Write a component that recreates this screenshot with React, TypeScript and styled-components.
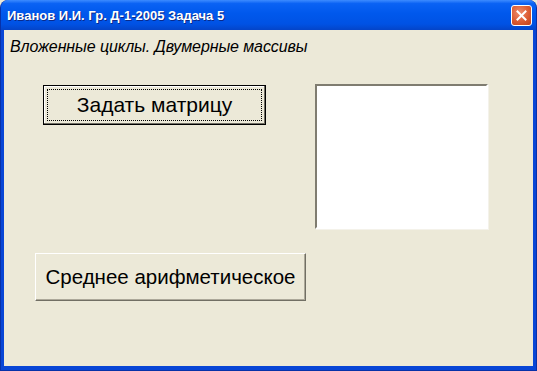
import styled, { createGlobalStyle } from "styled-components";

const GlobalStyle = createGlobalStyle`
    html, body {
        margin: 0;
        padding: 0;
        background: #ece9d8;
    }
    body {
        font-family: "Liberation Sans", Arial, sans-serif;
    }
`;

const Frame = styled.div`
    width: 537px;
    height: 371px;
    box-sizing: border-box;
    display: flex;
    flex-direction: column;
    background: #0846d6;
    border-radius: 8px 8px 0 0;
    overflow: hidden;
    border: 1px solid #0831a8;
    border-top: 0;
`;

const TitleBar = styled.div`
    height: 30px;
    flex-shrink: 0;
    display: flex;
    align-items: center;
    justify-content: space-between;
    padding: 0 4px 0 6px;
    background: linear-gradient(
        to bottom,
        #3d8bff 0%,
        #0a62f4 12%,
        #0058ec 45%,
        #0052e4 80%,
        #0444c8 100%
    );
`;

const Title = styled.span`
    color: #fff;
    font-weight: bold;
    font-size: 13px;
    letter-spacing: 0;
    text-shadow: 1px 1px 0 #0a2a8a;
`;

const CloseButton = styled.div`
    width: 19px;
    height: 19px;
    margin-top: 1px;
    border: 1px solid #fff;
    border-radius: 3px;
    display: flex;
    align-items: center;
    justify-content: center;
    background: radial-gradient(circle at 40% 35%, #ee8d6e 0%, #dc5c33 55%, #c2401a 100%);
`;

const Client = styled.div`
    flex: 1;
    margin: 0 3px 4px 3px;
    background: #ece9d8;
    padding: 8px 0 0 6px;
`;

const Caption = styled.div`
    font-size: 16px;
    font-style: italic;
    color: #000;
    letter-spacing: -0.1px;
    height: 17px;
`;

const TopRow = styled.div`
    display: flex;
    align-items: flex-start;
    margin-top: 30px;
`;

const Button = styled.button<{ $w: number; $h: number; $default?: boolean; $size: number }>`
    width: ${(p) => p.$w}px;
    height: ${(p) => p.$h}px;
    box-sizing: border-box;
    padding: 0;
    font-family: "Liberation Sans", Arial, sans-serif;
    font-size: ${(p) => p.$size}px;
    color: #000;
    background: #ece9d8;
    border: 1px solid ${(p) => (p.$default ? "#000" : "#fff")};
    border-right-color: ${(p) => (p.$default ? "#000" : "#716f64")};
    border-bottom-color: ${(p) => (p.$default ? "#000" : "#716f64")};
    box-shadow: ${(p) =>
        p.$default
            ? "inset -1px -1px 0 #716f64, inset 1px 1px 0 #fff"
            : "inset -1px -1px 0 #aca899"};
    position: relative;
    display: flex;
    align-items: center;
    justify-content: center;
`;

const FocusRect = styled.span`
    position: absolute;
    inset: 3px;
    border: 1px dotted #000;
    pointer-events: none;
`;

const ButtonSlot = styled.div`
    margin-left: 33px;
`;

const ListBox = styled.div`
    width: 173px;
    height: 145px;
    box-sizing: border-box;
    margin-left: 49px;
    margin-top: -1px;
    background: #fff;
    border: 2px solid #fff;
    border-top-color: #7f7c70;
    border-left-color: #7f7c70;
    box-shadow: 1px 1px 0 #f4f2ea;
`;

const BottomRow = styled.div`
    margin-top: 24px;
    margin-left: 25px;
`;

export default function App() {
    return (
        <>
            <GlobalStyle />
            <Frame>
                <TitleBar>
                    <Title>Иванов И.И. Гр. Д-1-2005 Задача 5</Title>
                    <CloseButton>
                        <svg width="11" height="11" viewBox="0 0 11 11">
                            <path d="M1.5 1.5 L9.5 9.5 M9.5 1.5 L1.5 9.5" stroke="#fff" strokeWidth="2" strokeLinecap="square" />
                        </svg>
                    </CloseButton>
                </TitleBar>
                <Client>
                    <Caption>Вложенные циклы. Двумерные массивы</Caption>
                    <TopRow>
                        <ButtonSlot>
                            <Button $w={223} $h={40} $size={21} $default>
                                <FocusRect />
                                Задать матрицу
                            </Button>
                        </ButtonSlot>
                        <ListBox />
                    </TopRow>
                    <BottomRow>
                        <Button $w={271} $h={48} $size={20.5}>
                            Среднее арифметическое
                        </Button>
                    </BottomRow>
                </Client>
            </Frame>
        </>
    );
}
